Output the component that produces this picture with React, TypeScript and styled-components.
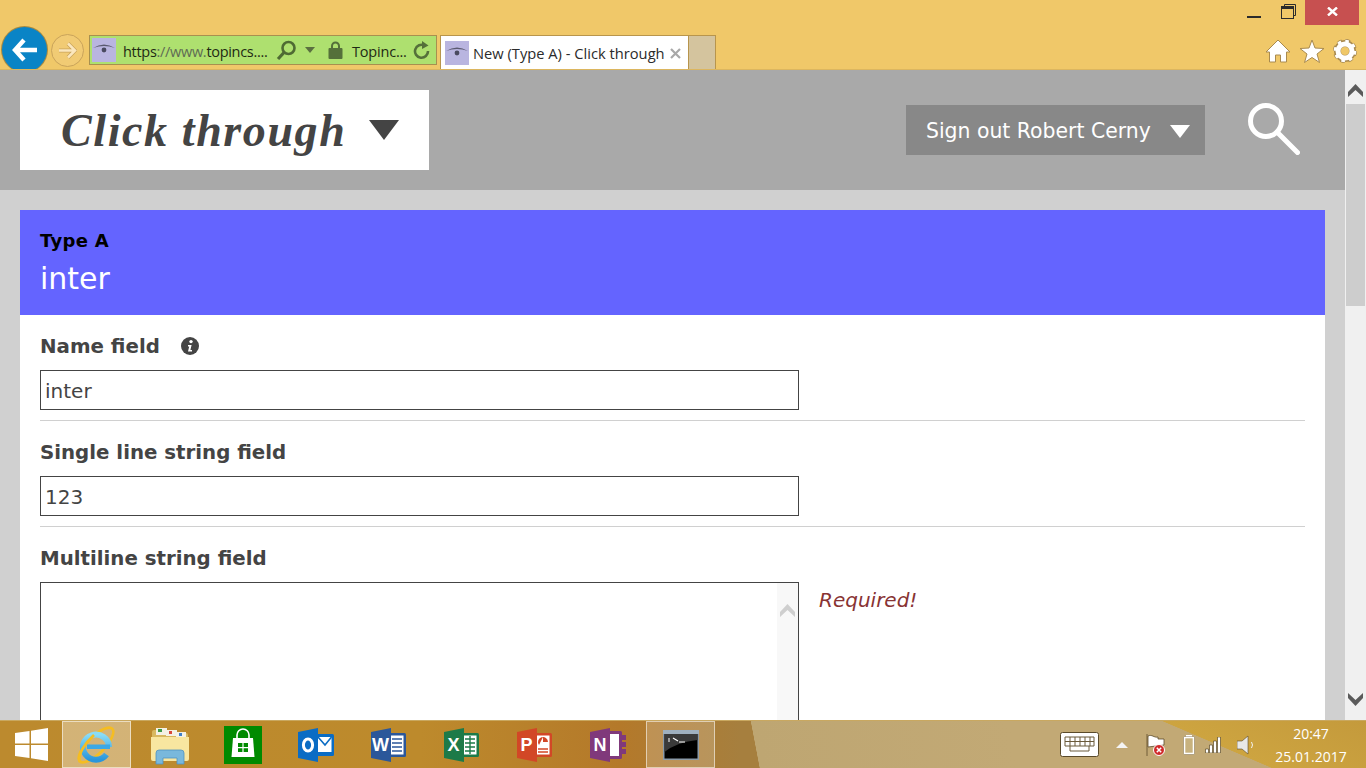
import React from "react";
import styled, { createGlobalStyle } from "styled-components";

const GlobalStyle = createGlobalStyle`
  html, body, #root {
    margin: 0;
    padding: 0;
    height: 100%;
    overflow: hidden;
  }
  body {
    font-family: "DejaVu Sans", sans-serif;
  }
`;

const Screen = styled.div`
  width: 1366px;
  height: 768px;
  display: flex;
  flex-direction: column;
  overflow: hidden;
`;

/* browser chrome */
const Chrome = styled.div`
  height: 69px;
  flex: none;
  display: flex;
  flex-direction: column;
  background: #f0c869;
  border-bottom: 1px solid #dcb65f;
  overflow: hidden;
`;

const WindowButtons = styled.div`
  height: 25px;
  flex: none;
  display: flex;
  justify-content: flex-end;
  align-items: flex-start;
  padding-right: 7px;
`;

const WindowButton = styled.div<{ $top: number }>`
  width: 34px;
  height: 25px;
  box-sizing: border-box;
  padding-top: ${(p) => p.$top}px;
  display: flex;
  align-items: flex-start;
  justify-content: center;
`;

const CloseButton = styled.div`
  width: 54px;
  height: 25px;
  box-sizing: border-box;
  padding-bottom: 2px;
  background: #c75050;
  display: flex;
  align-items: center;
  justify-content: center;
`;

const ToolRow = styled.div`
  height: 44px;
  display: flex;
  align-items: flex-start;
  padding-left: 2px;
`;

const BackButton = styled.div`
  width: 45px;
  height: 45px;
  margin-top: 2px;
  flex: none;
  border-radius: 50%;
  background: #0a84c6;
  box-shadow: 0 0 0 1px #a88a40;
  display: flex;
  align-items: center;
  justify-content: center;
`;

const ForwardButton = styled.div`
  width: 31px;
  height: 31px;
  margin: 9px 0 0 4px;
  flex: none;
  border-radius: 50%;
  border: 1px solid #c9a35a;
  background: #f1cb74;
  display: flex;
  align-items: center;
  justify-content: center;
`;

const AddressBar = styled.div`
  width: 344px;
  height: 28px;
  margin: 10px 0 0 5px;
  padding-left: 2px;
  flex: none;
  display: flex;
  align-items: center;
  background: #aee06f;
  border: 1px solid #a8904f;
  font-family: "Open Sans", sans-serif;
  font-size: 14.5px;
  color: #1f2a14;
`;

const Favicon = styled.div`
  width: 24px;
  height: 24px;
  flex: none;
  background: #b9b5e0;
  display: flex;
  align-items: center;
  justify-content: center;
`;

const Url = styled.span`
  margin-left: 7px;
  width: 153px;
  flex: none;
  padding-top: 2px;
  white-space: nowrap;
  letter-spacing: -0.3px;
`;

const UrlDim = styled.span`
  color: #5f6b54;
`;

const SecurityName = styled.span`
  margin-left: 9px;
  width: 61px;
  flex: none;
  padding-top: 2px;
  white-space: nowrap;
  letter-spacing: -0.2px;
`;

const BarIcon = styled.span<{ $gap?: number }>`
  display: flex;
  flex: none;
  margin-left: ${(p) => p.$gap ?? 0}px;
`;

const Tab = styled.div`
  width: 249px;
  height: 34px;
  margin: 10px 0 0 3px;
  flex: none;
  display: flex;
  align-items: center;
  gap: 4px;
  box-sizing: border-box;
  padding: 1px 0 0 4px;
  background: #fff;
  border: 1px solid #b8954c;
  border-bottom: none;
  font-family: "Open Sans", sans-serif;
  font-size: 14.7px;
  color: #2b2b2b;
  white-space: nowrap;
`;

const TabTitle = styled.span`
  flex: none;
  width: 191px;
`;

const TabClose = styled.span`
  display: flex;
  margin-left: 2px;
`;

const NewTab = styled.div`
  width: 27px;
  height: 34px;
  margin-top: 10px;
  flex: none;
  box-sizing: border-box;
  background: #d4c49e;
  border: 1px solid #b8954c;
  border-left: none;
  border-bottom: none;
`;

const ChromeTools = styled.div`
  margin-left: auto;
  margin-top: 14px;
  padding-right: 9px;
  display: flex;
  gap: 8px;
  align-items: center;
`;

/* page */
const Viewport = styled.div`
  flex: 1;
  min-height: 0;
  display: flex;
`;

const Page = styled.div`
  flex: 1;
  min-width: 0;
  background: #d0d0d0;
  overflow: hidden;
`;

const Header = styled.header`
  height: 120px;
  box-sizing: border-box;
  padding: 20px 45px 20px 20px;
  display: flex;
  align-items: flex-start;
  background: #a9a9a9;
`;

const Logo = styled.div`
  width: 409px;
  height: 80px;
  box-sizing: border-box;
  padding-left: 41px;
  display: flex;
  align-items: center;
  background: #fff;
  font-family: "Liberation Serif", serif;
  font-weight: bold;
  font-style: italic;
  font-size: 46px;
  letter-spacing: 1.6px;
  color: #444;
  white-space: nowrap;
`;

const Triangle = styled.span<{ $w: number; $h: number; $color: string }>`
  flex: none;
  width: 0;
  height: 0;
  border-left: ${(p) => p.$w / 2}px solid transparent;
  border-right: ${(p) => p.$w / 2}px solid transparent;
  border-top: ${(p) => p.$h}px solid ${(p) => p.$color};
`;

const LogoText = styled.span`
  width: 308px;
  flex: none;
`;

const SignOut = styled.div`
  margin: 15px 0 0 auto;
  width: 299px;
  height: 50px;
  box-sizing: border-box;
  padding: 2px 15px 0 20px;
  display: flex;
  align-items: center;
  justify-content: space-between;
  background: #888;
  color: #fff;
  font-size: 20.4px;
  white-space: nowrap;
`;

const SearchButton = styled.div`
  margin: 13px 0 0 43px;
  display: flex;
`;

const Content = styled.main`
  padding: 20px 20px 0;
`;

const TypeHead = styled.div`
  height: 105px;
  box-sizing: border-box;
  padding: 20px 20px 0;
  background: #6464ff;
`;

const TypeName = styled.div`
  font-size: 18px;
  line-height: 22px;
  font-weight: bold;
  letter-spacing: 0.3px;
  color: #000;
`;

const InstanceName = styled.div`
  margin-top: 7px;
  font-size: 30px;
  line-height: 40px;
  color: #fff;
`;

const Form = styled.div`
  padding: 0 20px;
  background: #fff;
`;

const Field = styled.div<{ $last?: boolean }>`
  height: ${(p) => (p.$last ? "auto" : "106px")};
  box-sizing: border-box;
  padding-top: 16px;
  border-bottom: ${(p) => (p.$last ? "none" : "1px solid #d0d0d0")};
`;

const Label = styled.div`
  display: flex;
  align-items: center;
  gap: 21px;
  height: 30px;
  margin-bottom: 9px;
  font-size: 19.8px;
  font-weight: bold;
  color: #444;
`;

const FieldRow = styled.div`
  display: flex;
  align-items: flex-start;
  gap: 20px;
`;

const TextInput = styled.div`
  width: 759px;
  height: 40px;
  box-sizing: border-box;
  padding: 2px 0 0 4px;
  display: flex;
  align-items: center;
  border: 1px solid #444;
  font-size: 20px;
  color: #444;
`;

const TextArea = styled.div`
  width: 759px;
  height: 200px;
  flex: none;
  box-sizing: border-box;
  display: flex;
  justify-content: flex-end;
  border: 1px solid #444;
`;

const AreaScroll = styled.div`
  width: 21px;
  padding-top: 21px;
  display: flex;
  justify-content: center;
  align-items: flex-start;
  background: #f8f8f8;
`;

const ErrorText = styled.div`
  margin-top: 5px;
  font-size: 20px;
  line-height: 26px;
  font-style: italic;
  color: #883333;
`;

const PageScroll = styled.div`
  width: 21px;
  flex: none;
  box-sizing: border-box;
  padding: 14px 1px 0;
  display: flex;
  flex-direction: column;
  align-items: center;
  background: #f0f0f0;
`;

const ScrollThumb = styled.div`
  width: 19px;
  height: 202px;
  margin-top: 7px;
  background: #cdcdcd;
`;

const ScrollDown = styled.div`
  margin-top: auto;
  margin-bottom: 14px;
  display: flex;
`;

/* taskbar */
const Taskbar = styled.footer`
  height: 48px;
  flex: none;
  box-sizing: border-box;
  border-top: 1px solid #c9a860;
  display: flex;
  align-items: stretch;
  background:
    linear-gradient(23.2deg, transparent 0 500.8px, #cda440 501.3px, #c49a3c 581px),
    linear-gradient(79.2deg, transparent 0 746px, #bea672 746.5px, #c2a975 1000px),
    linear-gradient(90deg, #bc8a2e 0, #bd8a2c 420px, #b4792a 620px, #a67f3e 740px);
`;

const StartSlot = styled.div`
  width: 62px;
  flex: none;
  display: flex;
  align-items: center;
  justify-content: center;
`;

const AppList = styled.div`
  display: flex;
  gap: 4px;
`;

const AppSlot = styled.div<{ $open?: boolean; $dark?: boolean }>`
  width: 69px;
  flex: none;
  box-sizing: border-box;
  display: flex;
  align-items: center;
  justify-content: center;
  border: 1px solid ${(p) => (p.$open ? "rgba(255,255,255,0.55)" : "transparent")};
  background: ${(p) =>
    !p.$open ? "transparent" : p.$dark ? "rgba(255,255,255,0.18)" : "rgba(255,255,255,0.35)"};
`;

const Tray = styled.div`
  margin-left: auto;
  display: flex;
  align-items: center;
  color: #fff;
`;

const TrayItem = styled.span<{ $gap: number }>`
  display: flex;
  margin-left: ${(p) => p.$gap}px;
`;

const Clock = styled.div`
  width: 94px;
  margin-left: 9px;
  margin-right: 8px;
  text-align: center;
  font-family: "Open Sans", sans-serif;
  font-size: 14px;
  line-height: 23px;
  color: #fff;
`;

const EyeIcon = () => (
  <svg width="24" height="24" viewBox="0 0 24 24">
    <path d="M1 10 Q12 3 23 10 Q12 6 1 10 Z" fill="#5a5a70" />
    <circle cx="12" cy="12" r="2.4" fill="#4a4a60" />
  </svg>
);

const ChevronUp = ({ color }: { color: string }) => (
  <svg width="15" height="13" viewBox="0 0 15 13">
    <path d="M0 8 L7.5 0 L15 8 V13 L7.5 6 L0 13 Z" fill={color} />
  </svg>
);

const ChevronDown = ({ color }: { color: string }) => (
  <svg width="15" height="13" viewBox="0 0 15 13">
    <path d="M0 0 L7.5 7 L15 0 V5 L7.5 13 L0 5 Z" fill={color} />
  </svg>
);

const WordTile = ({ back, letter, children }: { back: string; letter: string; children?: React.ReactNode }) => (
  <svg width="36" height="34" viewBox="0 0 36 34">
    <rect x="14" y="5" width="21" height="24" rx="1.5" fill={back} />
    <rect x="17" y="7.5" width="15.5" height="19" fill="#fff" />
    {children}
    <path d="M0 4 L20 0 V34 L0 30 Z" fill={back} />
    <text
      x="9.5"
      y="23"
      textAnchor="middle"
      fontFamily="Liberation Sans, sans-serif"
      fontWeight="bold"
      fontSize="18"
      fill="#fff"
    >
      {letter}
    </text>
  </svg>
);

const Lines = ({ color }: { color: string }) => (
  <g stroke={color} strokeWidth="1.6">
    <path d="M21 11 H31 M21 15 H31 M21 19 H31 M21 23 H31" />
  </g>
);

const App = () => (
  <Screen>
    <GlobalStyle />
    <Chrome>
      <WindowButtons>
        <WindowButton $top={16}>
          <svg width="14" height="2" viewBox="0 0 14 2">
            <rect width="14" height="2" fill="#2b2b2b" />
          </svg>
        </WindowButton>
        <WindowButton $top={4}>
          <svg width="15" height="15" viewBox="0 0 15 15">
            <path d="M3.5 2 V0.5 H14.5 V11.5 H13" fill="none" stroke="#2b2b2b" />
            <rect x="0.5" y="2.5" width="12" height="12" fill="none" stroke="#2b2b2b" />
            <rect x="0" y="2" width="13" height="3" fill="#2b2b2b" />
          </svg>
        </WindowButton>
        <CloseButton>
          <svg width="11" height="9" viewBox="0 0 11 9">
            <path d="M1 0.5 L10 8.5 M10 0.5 L1 8.5" stroke="#fff" strokeWidth="2.4" />
          </svg>
        </CloseButton>
      </WindowButtons>
      <ToolRow>
        <BackButton>
          <svg width="26" height="24" viewBox="0 0 26 24">
            <path d="M12 2 L3 12 L12 22 M3.5 12 H25" fill="none" stroke="#fff" strokeWidth="4.4" />
          </svg>
        </BackButton>
        <ForwardButton>
          <svg width="19" height="17" viewBox="0 0 19 17">
            <path d="M10 1.5 L17 8.5 L10 15.5 M17 8.5 H1" fill="none" stroke="#c9a35a" strokeWidth="4" />
            <path d="M10 1.5 L17 8.5 L10 15.5 M17 8.5 H1" fill="none" stroke="#fbe7bd" strokeWidth="2.6" />
          </svg>
        </ForwardButton>
        <AddressBar>
          <Favicon>
            <EyeIcon />
          </Favicon>
          <Url>
            https<UrlDim>://www.</UrlDim>topincs....
          </Url>
          <BarIcon>
            <svg width="21" height="21" viewBox="0 0 21 21">
              <circle cx="12.5" cy="8" r="6" fill="none" stroke="#4f6b33" strokeWidth="2.6" />
              <path d="M8 12.5 L2 19" stroke="#4f6b33" strokeWidth="3.2" />
            </svg>
          </BarIcon>
          <BarIcon $gap={8}>
            <svg width="10" height="6" viewBox="0 0 10 6">
              <path d="M0 0 H10 L5 6 Z" fill="#5a7040" />
            </svg>
          </BarIcon>
          <BarIcon $gap={13}>
            <svg width="15" height="18" viewBox="0 0 15 18">
              <path d="M4 8 V5 a3.5 3.5 0 0 1 7 0 V8" fill="none" stroke="#55703a" strokeWidth="2" />
              <rect x="0.5" y="7" width="14" height="11" rx="1" fill="#55703a" />
            </svg>
          </BarIcon>
          <SecurityName>Topinc...</SecurityName>
          <BarIcon>
            <svg width="17" height="19" viewBox="0 0 17 19">
              <path d="M11.5 4.5 A6.5 6.5 0 1 0 15 10" fill="none" stroke="#55703a" strokeWidth="2.6" />
              <path d="M9 0 L15.5 4.5 L9 8 Z" fill="#55703a" />
            </svg>
          </BarIcon>
        </AddressBar>
        <Tab>
          <Favicon>
            <EyeIcon />
          </Favicon>
          <TabTitle>New (Type A) - Click through</TabTitle>
          <TabClose>
            <svg width="11" height="11" viewBox="0 0 11 11">
              <path d="M1 1 L10 10 M10 1 L1 10" stroke="#a8a8a8" strokeWidth="2.2" />
            </svg>
          </TabClose>
        </Tab>
        <NewTab />
        <ChromeTools>
          <svg width="26" height="24" viewBox="0 0 26 24">
            <path
              d="M13 1 L25 13 H21.5 V23 H15.5 V16 H10.5 V23 H4.5 V13 H1 Z"
              fill="#fff"
              stroke="#a88a50"
              strokeLinejoin="round"
            />
          </svg>
          <svg width="26" height="24" viewBox="0 0 26 24">
            <path
              d="M13 1 L16 9 L25 9.5 L18 15 L20.5 23.5 L13 18.5 L5.5 23.5 L8 15 L1 9.5 L10 9 Z"
              fill="#fff"
              stroke="#a88a50"
              strokeLinejoin="round"
            />
          </svg>
          <svg width="24" height="24" viewBox="0 0 24 24">
            <circle cx="12" cy="12" r="7.5" fill="none" stroke="#a88a50" strokeWidth="7" />
            <circle cx="12" cy="12" r="9" fill="none" stroke="#a88a50" strokeWidth="6" strokeDasharray="4 3.07" />
            <circle cx="12" cy="12" r="7" fill="none" stroke="#fff" strokeWidth="5" />
            <circle cx="12" cy="12" r="9" fill="none" stroke="#fff" strokeWidth="4.6" strokeDasharray="3.2 3.87" />
          </svg>
        </ChromeTools>
      </ToolRow>
    </Chrome>

    <Viewport>
      <Page>
        <Header>
          <Logo>
            <LogoText>Click through</LogoText>
            <Triangle $w={30} $h={20} $color="#444" />
          </Logo>
          <SignOut>
            Sign out Robert Cerny
            <Triangle $w={20} $h={13} $color="#fff" />
          </SignOut>
          <SearchButton>
            <svg width="52" height="52" viewBox="0 0 52 52">
              <circle cx="18" cy="18" r="15.5" fill="none" stroke="#fff" strokeWidth="5" />
              <path d="M29 29 L49.5 49.5" stroke="#fff" strokeWidth="5" strokeLinecap="round" />
            </svg>
          </SearchButton>
        </Header>
        <Content>
          <TypeHead>
            <TypeName>Type A</TypeName>
            <InstanceName>inter</InstanceName>
          </TypeHead>
          <Form>
            <Field>
              <Label>
                Name field
                <svg width="18" height="18" viewBox="0 0 18 18">
                  <circle cx="9" cy="9" r="9" fill="#444" />
                  <circle cx="10" cy="4.6" r="1.7" fill="#fff" />
                  <path d="M7 8 H10.6 L9.4 13 H11 V14.4 H7 L8.2 9.4 H7 Z" fill="#fff" />
                </svg>
              </Label>
              <TextInput>inter</TextInput>
            </Field>
            <Field>
              <Label>Single line string field</Label>
              <TextInput>123</TextInput>
            </Field>
            <Field $last>
              <Label>Multiline string field</Label>
              <FieldRow>
                <TextArea>
                  <AreaScroll>
                    <ChevronUp color="#cfcfcf" />
                  </AreaScroll>
                </TextArea>
                <ErrorText>Required!</ErrorText>
              </FieldRow>
            </Field>
          </Form>
        </Content>
      </Page>
      <PageScroll>
        <ChevronUp color="#5a5a5a" />
        <ScrollThumb />
        <ScrollDown>
          <ChevronDown color="#5a5a5a" />
        </ScrollDown>
      </PageScroll>
    </Viewport>

    <Taskbar>
      <StartSlot>
        <svg width="33" height="33" viewBox="0 0 33 33">
          <path d="M0 5 L14.5 3 V15.5 H0 Z M16 2.8 L33 0 V15.5 H16 Z M0 17 H14.5 V30 L0 28 Z M16 17 H33 V33 L16 30.2 Z" fill="#fff" />
        </svg>
      </StartSlot>
      <AppList>
        <AppSlot $open>
          <svg width="40" height="40" viewBox="0 0 40 40">
            <defs>
              <linearGradient id="ieBlue" x1="0" y1="0" x2="0" y2="1">
                <stop offset="0" stopColor="#8adcf6" />
                <stop offset="1" stopColor="#2a96dc" />
              </linearGradient>
            </defs>
            <ellipse cx="19" cy="20" rx="23" ry="8.5" transform="rotate(-45 19 20)" fill="none" stroke="#f5bd22" strokeWidth="2.6" />
            <path d="M32 22 A13 12.5 0 1 0 29.5 29.5" fill="none" stroke="url(#ieBlue)" strokeWidth="6" />
            <rect x="10" y="19.5" width="23" height="4.5" fill="#3ba8e6" />
            <path d="M3 37 C0 30 8 18 17 10" fill="none" stroke="#f5bd22" strokeWidth="2.8" />
          </svg>
        </AppSlot>
        <AppSlot>
          <svg width="40" height="40" viewBox="0 0 40 40">
            <path d="M2 7 a2 2 0 0 1 2 -2 H15 L17 8 H36 a2 2 0 0 1 2 2 V34 H2 Z" fill="#d8b860" />
            <rect x="6" y="3" width="11" height="7" fill="#f4f1e4" />
            <rect x="16" y="5" width="11" height="6" fill="#f4f1e4" />
            <rect x="26" y="7" width="10" height="5" fill="#f4f1e4" />
            <rect x="8" y="4" width="4" height="3" fill="#3d9a48" />
            <rect x="19" y="6" width="3" height="3" fill="#d9483a" />
            <rect x="29" y="8" width="3" height="3" fill="#3f7fc8" />
            <path d="M1 12 H39 V34 a2 2 0 0 1 -2 2 H3 a2 2 0 0 1 -2 -2 Z" fill="#f8e6a0" />
            <path d="M6 39 V28 a3 3 0 0 1 3 -3 H31 a3 3 0 0 1 3 3 V39 H27 V33 H13 V39 Z" fill="#79b8dc" stroke="#4f93c0" strokeWidth="0.8" />
          </svg>
        </AppSlot>
        <AppSlot>
          <svg width="38" height="38" viewBox="0 0 38 38">
            <rect width="38" height="38" fill="#008a00" />
            <path d="M9 12 H29 L30.5 31 H7.5 Z" fill="#fff" />
            <path d="M13 12 V9 a6 6 0 0 1 12 0 V12" fill="none" stroke="#fff" strokeWidth="1.6" />
            <path d="M14 17 H18.4 V21 H14 Z M19.6 17 H24 V21 H19.6 Z M14 22.2 H18.4 V26 H14 Z M19.6 22.2 H24 V26 H19.6 Z" fill="#008a00" />
          </svg>
        </AppSlot>
        <AppSlot>
          <svg width="36" height="34" viewBox="0 0 36 34">
            <rect x="17" y="6" width="19" height="22" rx="1.5" fill="#0a6cc4" />
            <rect x="20" y="9" width="13.5" height="15" fill="#fff" />
            <path d="M20 9 L27 17 L33.5 9" fill="none" stroke="#0a6cc4" strokeWidth="1.6" />
            <path d="M0 4 L20 0 V34 L0 30 Z" fill="#0a6cc4" />
            <ellipse cx="10" cy="17" rx="4.6" ry="6" fill="none" stroke="#fff" strokeWidth="3" />
          </svg>
        </AppSlot>
        <AppSlot>
          <WordTile back="#2b579a" letter="W">
            <Lines color="#2b579a" />
          </WordTile>
        </AppSlot>
        <AppSlot>
          <WordTile back="#1d7a48" letter="X">
            <Lines color="#1d7a48" />
            <path d="M26 8 V26" stroke="#1d7a48" strokeWidth="1.4" />
          </WordTile>
        </AppSlot>
        <AppSlot>
          <WordTile back="#d24726" letter="P">
            <path d="M22 17 a5 5 0 1 1 9 -3 H26 V9" fill="#d24726" />
            <path d="M21 21 H31 M21 24 H31" stroke="#d24726" strokeWidth="1.4" />
          </WordTile>
        </AppSlot>
        <AppSlot>
          <svg width="36" height="34" viewBox="0 0 36 34">
            <rect x="14" y="3" width="18" height="28" rx="1.5" fill="#80397b" />
            <rect x="20" y="6" width="9" height="22" fill="#fff" />
            <rect x="30" y="7" width="6" height="5" fill="#80397b" />
            <rect x="30" y="14" width="6" height="5" fill="#80397b" />
            <rect x="30" y="21" width="6" height="5" fill="#80397b" />
            <path d="M0 4 L20 0 V34 L0 30 Z" fill="#80397b" />
            <text x="10" y="23" textAnchor="middle" fontFamily="Liberation Sans, sans-serif" fontWeight="bold" fontSize="18" fill="#fff">
              N
            </text>
          </svg>
        </AppSlot>
        <AppSlot $open $dark>
          <svg width="36" height="30" viewBox="0 0 36 30">
            <rect width="36" height="30" fill="#8b9aa8" />
            <rect y="0" width="36" height="4" fill="#9fb0bf" />
            <rect x="1.5" y="4" width="33" height="24.5" fill="#000" />
            <path d="M1.5 4 H34.5 V10 Q14 12 1.5 22 Z" fill="#3a3a3a" />
            <path d="M5 9 H7 M5 11 H7 M10 8 L15 11 M16 12 H22" stroke="#fff" strokeWidth="1.2" />
          </svg>
        </AppSlot>
      </AppList>
      <Tray>
        <TrayItem $gap={0}>
          <svg width="39" height="25" viewBox="0 0 39 25">
            <rect x="0.5" y="0.5" width="38" height="24" rx="2" fill="#fff" stroke="#5a4a2a" />
            <path
              d="M5 5 H34 M5 9.5 H34 M5 14 H34 M5 5 V14 M10 5 V14 M15 5 V14 M20 5 V14 M25 5 V14 M30 5 V14 M34 5 V14 M10 14 V19 H29 V14"
              fill="none"
              stroke="#6a5a3a"
            />
          </svg>
        </TrayItem>
        <TrayItem $gap={17}>
          <svg width="12" height="6" viewBox="0 0 12 6">
            <path d="M6 0 L12 6 H0 Z" fill="#f4f4f4" />
          </svg>
        </TrayItem>
        <TrayItem $gap={18}>
          <svg width="19" height="22" viewBox="0 0 19 22">
            <path d="M1 0 V22 M2 2 C6 0 8 4 12 3 V5 H18 V11 L2 13 Z" fill="#fff" stroke="#5a4a2a" strokeWidth="0.8" />
            <circle cx="13" cy="16" r="5.5" fill="#d02a2a" stroke="#fff" />
            <path d="M10.8 13.8 L15.2 18.2 M15.2 13.8 L10.8 18.2" stroke="#fff" strokeWidth="1.5" />
          </svg>
        </TrayItem>
        <TrayItem $gap={18}>
          <svg width="12" height="20" viewBox="0 0 12 20">
            <rect x="3" y="0" width="6" height="2" fill="#fff" />
            <rect x="0.5" y="1.5" width="11" height="18" rx="1" fill="#5a4a2a" />
            <rect x="1.5" y="2.5" width="9" height="16" fill="#c8b27e" stroke="#fff" strokeWidth="1.6" />
          </svg>
        </TrayItem>
        <TrayItem $gap={10}>
          <svg width="16" height="16" viewBox="0 0 16 16">
            <path d="M0.5 12 H3.5 V16 H0.5 Z M4.5 8 H7.5 V16 H4.5 Z M8.5 4 H11.5 V16 H8.5 Z M12.5 0 H15.5 V16 H12.5 Z" fill="#fff" stroke="#5a4a2a" strokeWidth="0.7" />
          </svg>
        </TrayItem>
        <TrayItem $gap={16}>
          <svg width="18" height="20" viewBox="0 0 18 20">
            <path d="M0 6 H5 L11 1 V19 L5 14 H0 Z" fill="#e8e8e8" stroke="#5a4a2a" strokeWidth="0.6" />
            <path d="M14.5 7 Q16.5 10 14.5 13" fill="none" stroke="#f4f4f4" />
          </svg>
        </TrayItem>
        <Clock>
          20:47
          <br />
          25.01.2017
        </Clock>
      </Tray>
    </Taskbar>
  </Screen>
);

export default App;
